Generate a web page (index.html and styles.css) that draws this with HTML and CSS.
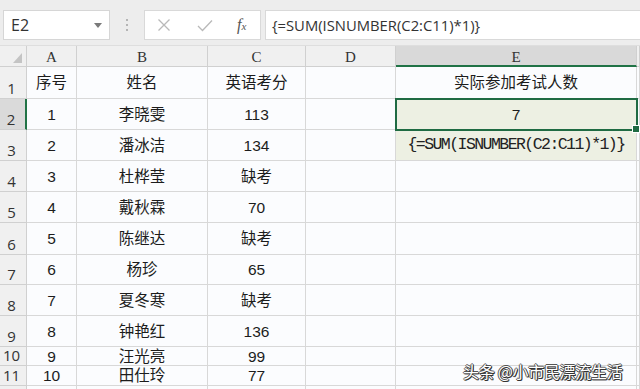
FILE: index.html
```html
<!DOCTYPE html>
<html lang="zh">
<head>
<meta charset="utf-8">
<link rel="stylesheet" href="styles.css">
</head>
<body>
<div class="app">
  <div class="toolbar">
    <div class="namebox">
      <span class="nb-text">E2</span>
      <svg class="nb-arrow" width="8" height="5" viewBox="0 0 8 5"><path d="M0 0H8L4 5Z" fill="#7a7a7a"/></svg>
    </div>
    <div class="grip"><i></i><i></i><i></i></div>
    <div class="fbtns">
      <svg class="fb-x" width="14" height="14" viewBox="0 0 14 14"><path d="M1.5 1.5L12.5 12.5M12.5 1.5L1.5 12.5" stroke="#b9b9b9" stroke-width="1.3" fill="none"/></svg>
      <svg class="fb-ok" width="16" height="13" viewBox="0 0 16 13"><path d="M1 7L5.5 11.5L15 1.5" stroke="#b9b9b9" stroke-width="1.3" fill="none"/></svg>
      <span class="fx">f<span class="fx-x">x</span></span>
    </div>
    <div class="finput">{=SUM(ISNUMBER(C2:C11)*1)}</div>
  </div>
  <div class="sheet">
    <div class="c corner"><svg width="9" height="10" viewBox="0 0 9 10"><path d="M9 0V10H0Z" fill="#c4c4c4"/></svg></div>
    <div class="c ch">A</div><div class="c ch">B</div><div class="c ch">C</div><div class="c ch">D</div><div class="c ch ch-sel">E</div><div class="c ch"></div>

    <div class="c rh">1</div><div class="c">序号</div><div class="c">姓名</div><div class="c">英语考分</div><div class="c"></div><div class="c e-top">实际参加考试人数</div><div class="c"></div>
    <div class="c rh rh-sel">2</div><div class="c">1</div><div class="c">李晓雯</div><div class="c">113</div><div class="c"></div><div class="c sel">7</div><div class="c"></div>
    <div class="c rh">3</div><div class="c">2</div><div class="c">潘冰洁</div><div class="c">134</div><div class="c"></div><div class="c tint mono">{=SUM(ISNUMBER(C2:C11)*1)}</div><div class="c"></div>
    <div class="c rh">4</div><div class="c">3</div><div class="c">杜桦莹</div><div class="c">缺考</div><div class="c"></div><div class="c"></div><div class="c"></div>
    <div class="c rh">5</div><div class="c">4</div><div class="c">戴秋霖</div><div class="c">70</div><div class="c"></div><div class="c"></div><div class="c"></div>
    <div class="c rh">6</div><div class="c">5</div><div class="c">陈继达</div><div class="c">缺考</div><div class="c"></div><div class="c"></div><div class="c"></div>
    <div class="c rh">7</div><div class="c">6</div><div class="c">杨珍</div><div class="c">65</div><div class="c"></div><div class="c"></div><div class="c"></div>
    <div class="c rh">8</div><div class="c">7</div><div class="c">夏冬寒</div><div class="c">缺考</div><div class="c"></div><div class="c"></div><div class="c"></div>
    <div class="c rh">9</div><div class="c">8</div><div class="c">钟艳红</div><div class="c">136</div><div class="c"></div><div class="c"></div><div class="c"></div>
    <div class="c rh">10</div><div class="c">9</div><div class="c">汪光亮</div><div class="c">99</div><div class="c"></div><div class="c"></div><div class="c"></div>
    <div class="c rh">11</div><div class="c">10</div><div class="c">田仕玲</div><div class="c">77</div><div class="c"></div><div class="c"></div><div class="c"></div>
    <div class="c rh"></div><div class="c"></div><div class="c"></div><div class="c"></div><div class="c"></div><div class="c"></div><div class="c"></div>
  </div>
  <div class="watermark">头条 @小市民漂流生活</div>
</div>
</body>
</html>
```
FILE: styles.css
```css
* { box-sizing: border-box; }
html, body { margin: 0; padding: 0; }
body {
  width: 640px;
  height: 389px;
  overflow: hidden;
  background: #eeeeee;
  font-family: "Liberation Sans", "Noto Sans CJK SC", sans-serif;
}
.app { position: relative; width: 640px; height: 389px; overflow: hidden; }

.toolbar {
  height: 46px;
  display: flex;
  align-items: flex-start;
  padding-top: 10px;
  background: #ededed;
  border-bottom: 1px solid #dedede;
}
.namebox {
  margin-left: 3px;
  width: 107px;
  height: 30px;
  background: #fff;
  border: 1px solid #d6d6d6;
  display: flex;
  align-items: center;
  padding-left: 7px;
  padding-right: 7px;
  justify-content: space-between;
}
.nb-text { font-family: "Open Sans", "Noto Sans", sans-serif; font-size: 16px; color: #333; }
.grip {
  width: 34px;
  height: 30px;
  display: flex;
  flex-direction: column;
  align-items: center;
  justify-content: center;
  gap: 3px;
}
.grip i { display: block; width: 2px; height: 2px; background: #b5b5b5; }
.fbtns {
  width: 117px;
  height: 30px;
  background: #fff;
  border: 1px solid #d9d9d9;
  display: flex;
  align-items: center;
  padding-left: 12px;
}
.fb-x { margin-right: 26px; }
.fb-ok { margin-right: 24px; }
.fx { font-family: "Liberation Serif", serif; font-style: italic; font-size: 16px; color: #555; }
.fx-x { font-size: 11px; }
.finput {
  margin-left: 4px;
  flex: 1;
  height: 30px;
  background: #fff;
  border: 1px solid #d9d9d9;
  border-right: none;
  display: flex;
  align-items: center;
  padding-left: 6px;
  font-family: "Open Sans", "Noto Sans", sans-serif;
  font-size: 14.8px;
  color: #333;
}

.sheet {
  display: grid;
  grid-template-columns: 27px 50px 131px 98px 90px 241px 3px;
  grid-template-rows: 21px 32px 31px 31px 31px 31px 32px 30px 31px 31px 19px 20px 10px;
  background: #fbfcfe;
}
.c {
  border-right: 1px solid #d8d8d8;
  border-bottom: 1px solid #d8d8d8;
  display: flex;
  align-items: center;
  justify-content: center;
  padding-top: 1px;
  font-size: 15.5px;
  line-height: 1.1;
  color: #1c1c1c;
  white-space: nowrap;
  overflow: visible;
}
.corner {
  background: #f0f0f0;
  border-color: #d0d0d0;
  align-items: flex-end;
  justify-content: flex-end;
  padding: 0 4px 3px 0;
}
.ch {
  background: #f0f0f0;
  border-color: #d0d0d0;
  font-family: "Liberation Serif", serif;
  font-size: 15px;
  color: #333;
  align-items: flex-end;
  padding-bottom: 1px;
}
.ch-sel {
  background: #d9d9d9;
  border-bottom: 2px solid #217346;
  padding-bottom: 0;
}
.rh {
  background: #f0f0f0;
  border-color: #d0d0d0;
  align-items: flex-end;
  padding-bottom: 2px;
  padding-right: 3px;
  font-family: "Open Sans", "Noto Sans", sans-serif;
  font-size: 15px;
  color: #333;
}
.rh-sel {
  background: #dadada;
  border-right: 2px solid #217346;
}
.tint { background: #edf0e3; }
.sel {
  background: #edf0e3;
  position: relative;
  outline: 2px solid #1f6b43;
  outline-offset: -1px;
  z-index: 2;
}
.sel::after {
  content: "";
  position: absolute;
  right: -4px;
  bottom: -4px;
  width: 6px;
  height: 6px;
  background: #1f6b43;
  border: 1px solid #fff;
}
.mono {
  font-family: "Liberation Mono", monospace;
  font-size: 16.5px;
  letter-spacing: -1.55px;
  color: #222;
}
.watermark {
  position: absolute;
  left: 463px;
  top: 359px;
  font-family: "Noto Sans CJK SC", sans-serif;
  font-size: 16px;
  color: #fff;
  letter-spacing: -0.3px;
  text-shadow: 1px 1px 0 #333, -1px 0 0 #555, 0 -1px 0 #555, 1px 0 0 #333, 0 1px 0 #333;
  white-space: nowrap;
}
```
